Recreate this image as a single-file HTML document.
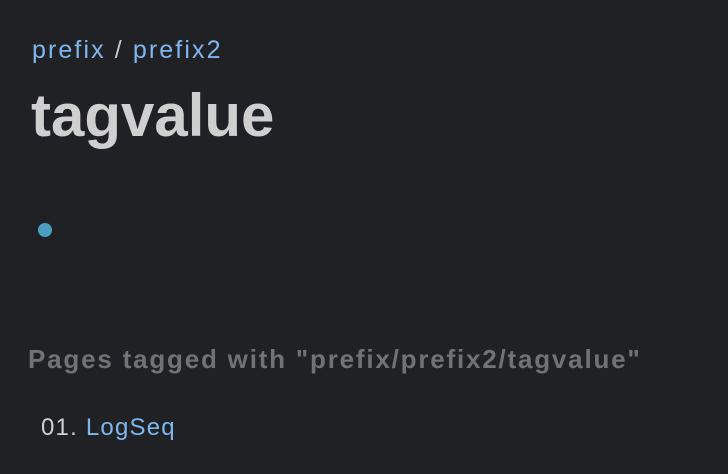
<!DOCTYPE html>
<html><head><meta charset="utf-8"><style>
html,body{margin:0;padding:0;background:#202125;width:728px;height:474px;overflow:hidden;font-family:"Liberation Sans",sans-serif;}
.t{position:absolute;white-space:nowrap;}
.link{color:#7fb6ee;}
</style></head><body>
<div class="t" style="left:32px;top:34px;font-size:25px;line-height:32px;letter-spacing:2.1px;"><span class="link">prefix</span><span style="color:#c8c8c8"> / </span><span class="link">prefix2</span></div>
<div class="t" style="left:31px;top:80px;font-size:60px;line-height:72px;font-weight:bold;color:#cfcfcf;">tagvalue</div>
<div style="position:absolute;left:38px;top:223px;width:14px;height:14px;border-radius:50%;background:#4a9ec0;"></div>
<div class="t" style="left:28px;top:342px;font-size:26px;line-height:34px;font-weight:bold;color:#727272;letter-spacing:1.8px;">Pages tagged with "prefix/prefix2/tagvalue"</div>
<div class="t" style="left:41px;top:412px;font-size:24px;line-height:32px;color:#d0d0d0;letter-spacing:1.2px;">01. <span class="link">LogSeq</span></div>
</body></html>
